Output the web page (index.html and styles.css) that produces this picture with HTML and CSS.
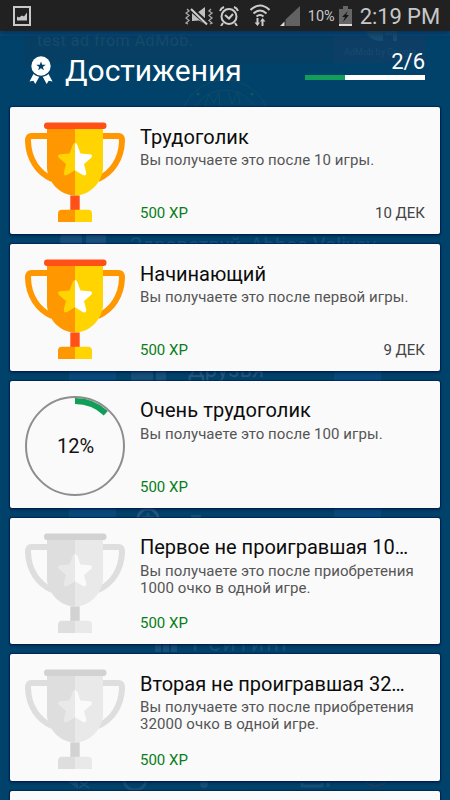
FILE: index.html
```html
<!DOCTYPE html>
<html lang="ru">
<head>
<meta charset="utf-8">
<title>Достижения</title>
<link rel="stylesheet" href="styles.css">
</head>
<body>
<svg class="defs" width="0" height="0" aria-hidden="true">
  <symbol id="trophy" viewBox="0 0 100 100">
    <g class="t-orange-line">
      <path d="M24 14H6.500Q3 14 3 19C3.500 37 13 51 27 57"/>
      <path d="M76 14H93.500Q97 14 97 19C96.500 37 87 51 73 57"/>
    </g>
    <path class="t-orange" d="M22 6H50V73.500C39 73.500 31 67 26 59Q22 52 22 46Z"/>
    <path class="t-yellow" d="M78 6H50V73.500C61 73.500 69 67 74 59Q78 52 78 46Z"/>
    <rect class="t-red" x="19" y="0.500" width="62.500" height="6.500" rx="3"/>
    <rect class="t-red" x="45.300" y="73.500" width="9.400" height="15"/>
    <path class="t-orange" d="M50 87.700H37Q33 87.700 33 91.500V100H50Z"/>
    <path class="t-yellow" d="M50 87.700H63Q67 87.700 67 91.500V100H50Z"/>
    <path class="t-starl" d="M50 21Q48.500 21 47.700 23L44.500 31.500L35 32.300Q31.500 33 34 36L41 42L38.800 50.500Q38.500 54.500 42.200 53L50 48.200Z"/>
    <path class="t-starr" d="M50 21Q51.500 21 52.300 23L55.500 31.500L65 32.300Q68.500 33 66 36L59 42L61.200 50.500Q61.500 54.500 57.800 53L50 48.200Z"/>
  </symbol>
</svg>
<div class="screen">
  <svg class="backdrop" viewBox="0 0 450 800" aria-hidden="true">
    <rect x="0" y="31" width="450" height="5" fill="#06497a"/>
    <rect x="25" y="36" width="400" height="27" fill="#063f63"/>
    <rect x="334" y="36" width="91" height="27" fill="#0d3e66"/>
    <path d="M366 31q2 10 17 10v-10zM385 31h12v10h-4v-6h-8z" fill="#174e74"/>
    <text x="37" y="46" font-size="16" textLength="156" fill="#164a6b">test ad from AdMob.</text>
    <text x="344" y="55" font-size="9" textLength="72" fill="#174b70">AdMob by Google</text>
    <g fill="none" stroke="#104b68"><circle cx="225" cy="125" r="45"/><circle cx="225" cy="125" r="35"/><path d="M205 106l4-12 5 9 5-11 1 14m8-14 4 12 6-13 2 14"/></g>
    <circle cx="198" cy="94" r="1.500" fill="#17516a"/><circle cx="252" cy="94" r="1.500" fill="#17516a"/>
    <g fill="#164f77">
      <circle cx="71" cy="240" r="11"/><rect x="86" y="235" width="20" height="14"/>
      <text x="130" y="252" font-size="20" textLength="246">Здравствуй, Abbas Valiyev</text>
      <rect x="69" y="371" width="47" height="10" fill="#07497a"/><rect x="334" y="371" width="47" height="10" fill="#07497a"/>
      <rect x="69" y="507" width="47" height="10" fill="#07497a"/><rect x="334" y="507" width="47" height="10" fill="#07497a"/>
      <rect x="131" y="371" width="22" height="10"/><rect x="156" y="371" width="10" height="10"/>
      <text x="188" y="377" font-size="22" textLength="76" fill="#24577d">Друзья</text>
      <rect x="191" y="515" width="10" height="3"/>
      <circle cx="148" cy="519" r="10" fill="none" stroke="#24577d" stroke-width="3"/><path d="M148 511l2 5h5l-4 4h-6l-4-4h5z"/>
      <rect x="155" y="642" width="6" height="10"/><rect x="163" y="640" width="6" height="12"/><rect x="171" y="642" width="6" height="10"/>
      <text x="192" y="651" font-size="23" textLength="99">Рейтинг</text>
      <path d="M70 782l7 5v-5zM79 781l10 7M89 781l-10 7" stroke="#164f77" stroke-width="2"/>
      <path d="M124 780a11 10 0 0 0 22 0" fill="none" stroke="#164f77" stroke-width="3"/>
      <circle cx="204" cy="784" r="4"/><path d="M241 788l17-7-12 5z"/><path d="M302 783v3h20v-3m6 0v4" fill="none" stroke="#164f77" stroke-width="3"/>
      <path d="M366 782q9 8 20 0" fill="none" stroke="#1d3d63" stroke-width="2"/>
    </g>
  </svg>

  <header class="status">
    <svg class="s-left" viewBox="0 0 18 20"><rect x="1" y="1" width="16" height="18" fill="none" stroke="#c8c8c8" stroke-width="2"/><path d="M4 14.500v-4l2 1 3-2 2 1 3-4v8z" fill="#c8c8c8"/></svg>
    <div class="s-right">
      <svg class="mute" viewBox="0 0 30 20"><path d="M7 6h5l8-6v17l-6-3.500L7 14z" fill="#c0c0c0"/><path d="M6 2l17 15" stroke="#212121" stroke-width="5"/><path d="M6 2l16 15.500" stroke="#d0d0d0" stroke-width="2"/><path d="M2 2l2 2-3 2 3 2.500-3 2.500 3 2.500-3 2.500 2 1M26 2l-2 2 3 2-3 2.500 3 2.500-3 2.500 3 2.500-2 1" fill="none" stroke="#aaa" stroke-width="1.300"/></svg>
      <svg class="alarm" viewBox="0 0 20 20"><circle cx="10" cy="10.500" r="7.500" fill="none" stroke="#ccc" stroke-width="2"/><path d="M1 5q1-3 4-4M15 1q3 1 4 4M4 17l-2 3M16 17l2 3M6 9l4 3.500 4-4.500" fill="none" stroke="#ccc" stroke-width="2"/></svg>
      <svg class="wifi" viewBox="0 0 20 23"><path d="M0.500 6Q10-3 19.500 6M3.500 9.500Q10 3.500 16.500 9.500M6.500 12.500q3.500-3 7 0" fill="none" stroke="#ccc" stroke-width="2"/><path d="M7.500 14v6M12.500 16v6" stroke="#ccc" stroke-width="2"/><path d="M4.500 18.500h5.500l-2.500 3.500zM10 17.500l2.500-3.500 3 3.500z" fill="#ccc"/></svg>
      <svg class="signal" viewBox="0 0 20 20"><path d="M20 0v20H5.500v-6.500z" fill="#626262"/><path d="M0 20l4.500-4.500V20z" fill="#ddd"/></svg>
      <span class="pct">10%</span>
      <svg class="battery" viewBox="0 0 13 20"><path d="M4 0h5v3h4v17H0V3h4z" fill="#666"/><path d="M0 18h13v2H0z" fill="#ddd"/><path d="M9 5L3 11h3l-2 5 6-7H7z" fill="#151515"/></svg>
      <span class="clock">2:19 PM</span>
    </div>
  </header>

  <section class="heading">
    <svg class="medal" viewBox="0 0 24 28"><path d="M5 17L0.500 25.500l3.800-.8 2 3.300 4.400-8zM19 17l4.500 8.500-3.800-.8-2 3.300-4.400-8z" fill="#fff"/><circle cx="12" cy="10" r="10.800" fill="#004067"/><circle cx="12" cy="10" r="9.700" fill="#fff"/><path d="M12 5.500l1.200 3.200 3.500.1-2.800 2.100 1 3.300-2.900-1.900-2.900 1.900 1-3.300-2.800-2.100 3.500-.1z" fill="#004067"/></svg>
    <h1>Достижения</h1>
    <div class="summary">
      <span class="count">2/6</span>
      <div class="bar"><div class="bar-fill"></div></div>
    </div>
  </section>

  <main class="list">
    <article class="card">
      <svg class="art gold"><use href="#trophy"/></svg>
      <div class="body"><h2 class="wide">Трудоголик</h2><p>Вы получаете это после 10 игры.</p><div class="foot"><span class="xp">500 XP</span><span>10 ДЕК</span></div></div>
    </article>
    <article class="card">
      <svg class="art gold"><use href="#trophy"/></svg>
      <div class="body"><h2>Начинающий</h2><p>Вы получаете это после первой игры.</p><div class="foot"><span class="xp">500 XP</span><span>9 ДЕК</span></div></div>
    </article>
    <article class="card">
      <svg class="art" viewBox="0 0 100 100"><circle cx="50" cy="50" r="49" fill="none" stroke="#8e8e8e" stroke-width="2"/><path d="M50 5A45 45 0 0 1 80.800 17.200" fill="none" stroke="#129e5a" stroke-width="6"/><text class="ring-text" x="50.500" y="57" text-anchor="middle">12%</text></svg>
      <div class="body"><h2 class="wide">Очень трудоголик</h2><p>Вы получаете это после 100 игры.</p><div class="foot"><span class="xp">500 XP</span></div></div>
    </article>
    <article class="card">
      <svg class="art grey"><use href="#trophy"/></svg>
      <div class="body"><h2>Первое не проигравшая 10…</h2><p>Вы получаете это после приобретения 1000 очко в одной игре.</p><div class="foot"><span class="xp">500 XP</span></div></div>
    </article>
    <article class="card">
      <svg class="art grey"><use href="#trophy"/></svg>
      <div class="body"><h2>Вторая не проигравшая 32…</h2><p>Вы получаете это после приобретения 32000 очко в одной игре.</p><div class="foot"><span class="xp">500 XP</span></div></div>
    </article>
    <article class="card"></article>
  </main>
</div>
</body>
</html>
```
FILE: styles.css
```css
* { box-sizing: border-box; }
body { margin: 0; font-family: Roboto, "Noto Sans", sans-serif; }
h1, h2, p { margin: 0; font-weight: 400; }
.defs { display: block; }
.screen { position: relative; width: 450px; height: 800px; overflow: hidden; background: #004269; }
.backdrop { position: absolute; inset: 0; width: 450px; height: 800px; }
.status, .heading, .list { position: relative; }

.status { height: 31px; padding: 0 10px 0 13px; display: flex; justify-content: space-between; background: #212121; color: #c8c8c8; box-shadow: 0 3px 5px rgba(0, 20, 45, .4); }
.s-left { width: 18px; height: 20px; margin-top: 6px; }
.s-right { display: flex; align-items: flex-start; }
.s-right svg { flex: none; }
.mute { width: 30px; height: 20px; margin: 7px 4px 0 0; }
.alarm { width: 20px; height: 20px; margin: 6px 11px 0 0; }
.wifi { width: 20px; height: 23px; margin: 4px 10px 0 0; }
.signal { width: 20px; height: 20px; margin: 6px 8px 0 0; }
.pct { font-size: 14.500px; line-height: 20px; margin: 7px 4px 0 0; }
.battery { width: 13px; height: 20px; margin: 6px 8px 0 0; }
.clock { font-size: 22px; line-height: 26px; margin-top: 4px; letter-spacing: -.1px; white-space: nowrap; }

.heading { height: 76.300px; padding: 0 25px 0 28.500px; display: flex; align-items: flex-start; color: #fff; }
.medal { width: 24px; height: 28px; margin-top: 25px; }
h1 { font-size: 30px; line-height: 36px; margin: 22px 0 0 12.500px; }
.summary { width: 120px; margin: 17px 0 0 auto; text-align: right; }
.count { display: block; font-size: 22px; line-height: 27px; }
.bar { height: 5px; background: #fff; }
.bar-fill { width: 33.300%; height: 100%; background: #129e5a; }

.list { display: grid; grid-auto-rows: 126.800px; gap: 10px; padding: 0 10px; }
.card { display: flex; padding: 15px; background: #fafafa; border-radius: 2px; box-shadow: 0 0 1px 1px rgba(0, 15, 75, .55), 0 2px 3px rgba(0, 15, 60, .4); }
.art { flex: none; width: 100px; height: 100px; margin-right: 15px; overflow: visible; }
.ring-text { font-size: 20px; fill: #111; }
.body { flex: 1; min-width: 0; display: flex; flex-direction: column; }
h2 { font-size: 20px; line-height: 24px; margin-top: 2.500px; color: #0c0c0c; white-space: nowrap; }
.wide { letter-spacing: .12px; }
p { font-size: 15px; line-height: 17px; margin-top: 3.500px; letter-spacing: .08px; color: #555; }
.foot { display: flex; justify-content: space-between; margin-top: auto; margin-bottom: -3px; font-size: 15px; line-height: 18px; color: #444; }
.xp { color: #087d20; }

.gold { --orange: #ff9700; --yellow: #ffd400; --red: #ff5018; --starl: #ffd400; --starr: #fff; }
.grey { --orange: #dedede; --yellow: #e9e9e9; --red: #d2d2d2; --starl: #e9e9e9; --starr: #fafafa; }
.t-orange-line { fill: none; stroke: var(--orange); stroke-width: 6; }
.t-orange { fill: var(--orange); }
.t-yellow { fill: var(--yellow); }
.t-red { fill: var(--red); }
.t-starl { fill: var(--starl); }
.t-starr { fill: var(--starr); }
```
